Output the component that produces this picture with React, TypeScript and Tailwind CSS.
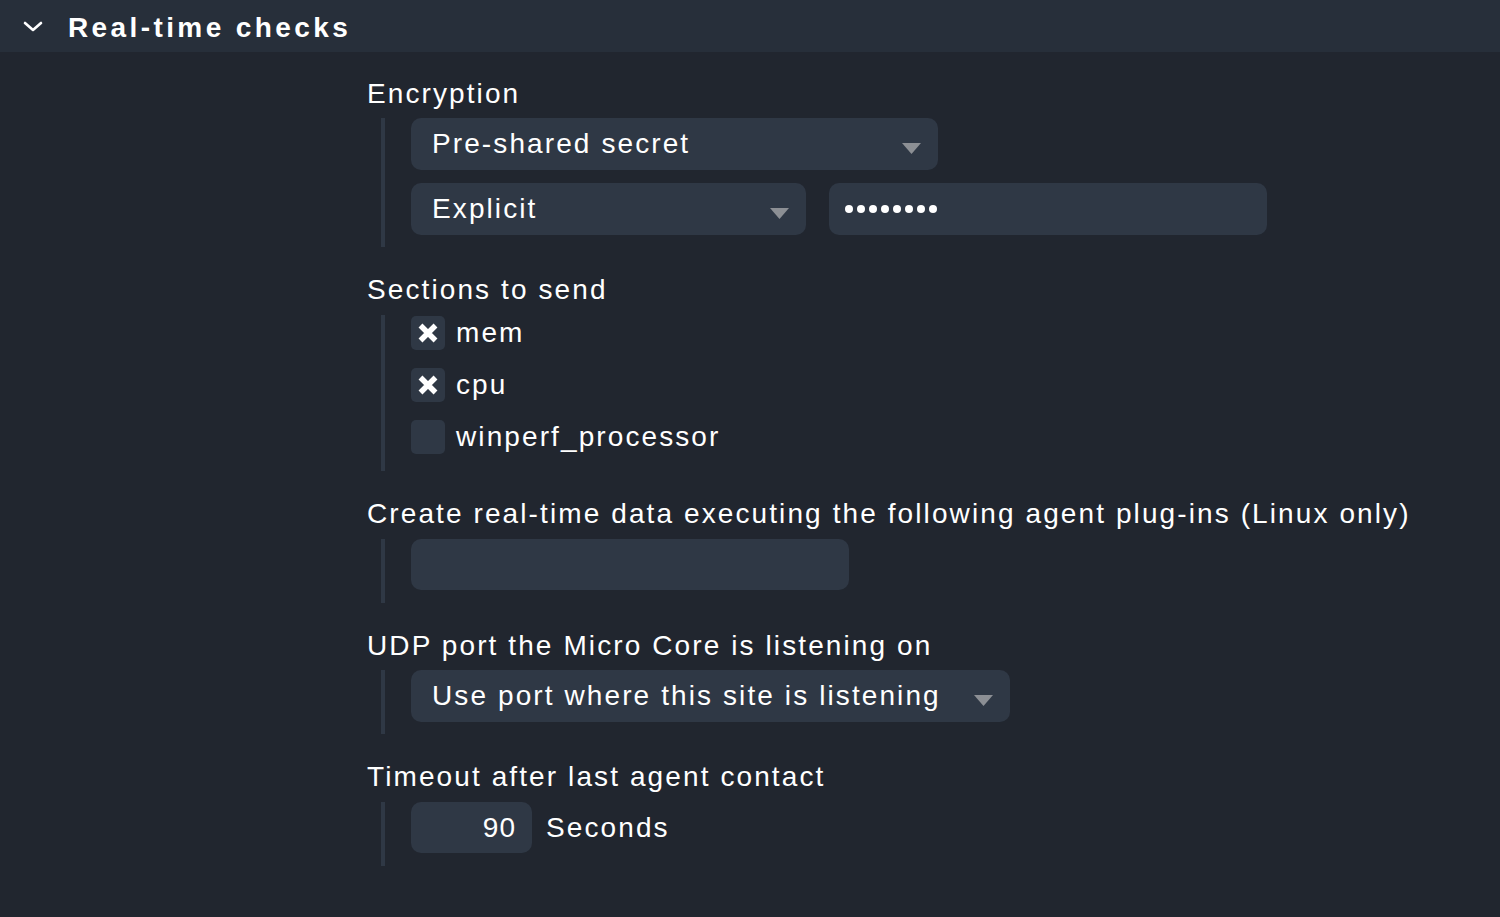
import React from "react";

const Arrow = () => (
  <svg width="19" height="11" viewBox="0 0 19 11" className="mt-[8px] shrink-0">
    <polygon points="0,0 19,0 9.5,11" fill="#8c8f94" />
  </svg>
);

const XMark = () => (
  <svg width="22" height="22" viewBox="0 0 22 22">
    <path d="M3.5 3.5 L18.5 18.5 M18.5 3.5 L3.5 18.5" stroke="#ffffff" strokeWidth="5.5" strokeLinecap="butt" />
  </svg>
);

const Label = ({ children, cls = "" }: { children: React.ReactNode; cls?: string }) => (
  <div className={`h-[32px] leading-[32px] text-[28px] tracking-[2.1px] text-white ${cls}`}>{children}</div>
);

const Block = ({ children, cls = "" }: { children: React.ReactNode; cls?: string }) => (
  <div className={`ml-[14px] border-l-4 border-[#2f3845] pl-[26px] ${cls}`}>{children}</div>
);

const Check = ({ checked, label }: { checked: boolean; label: string }) => (
  <div className="flex h-[52px] items-start pt-[1px]">
    <div className="flex h-[34px] w-[34px] items-center justify-center rounded-[5px] bg-[#2f3845]">
      {checked ? <XMark /> : null}
    </div>
    <span className="ml-[11px] h-[34px] leading-[34px] text-[28px] tracking-[2.1px] text-white">
      {label}
    </span>
  </div>
);

export default function App() {
  return (
    <div className="min-h-[917px] w-[1500px] bg-[#21262f] font-['Liberation_Sans',Arial,sans-serif]">
      <div className="flex h-[52px] items-center bg-[#272f3a] pl-[22px]">
        <svg width="22" height="14" viewBox="0 0 22 14">
          <path d="M3 4 L11 11 L19 4" stroke="#ffffff" strokeWidth="2.6" fill="none" strokeLinecap="round" strokeLinejoin="round" />
        </svg>
        <span className="ml-[24px] pt-[3px] text-[28px] font-bold tracking-[3.4px] text-white">
          Real-time checks
        </span>
      </div>

      <div className="pl-[367px] pt-[26px]">
        <Label>Encryption</Label>
        <Block cls="mt-[8px] pb-[12px]">
          <div className="flex h-[52px] w-[527px] items-center justify-between rounded-[10px] bg-[#2f3845] pl-[21px] pr-[17px]">
            <span className="text-[28px] tracking-[2.1px] text-white">Pre-shared secret</span>
            <Arrow />
          </div>
          <div className="mt-[13px] flex gap-[23px]">
            <div className="flex h-[52px] w-[395px] items-center justify-between rounded-[10px] bg-[#2f3845] pl-[21px] pr-[17px]">
              <span className="text-[28px] tracking-[2.1px] text-white">Explicit</span>
              <Arrow />
            </div>
            <div className="flex h-[52px] w-[438px] items-center gap-[4px] rounded-[10px] bg-[#2f3845] pl-[16px]">
              {Array.from({ length: 8 }).map((_, i) => (
                <span key={i} className="h-[8px] w-[8px] rounded-full bg-white" />
              ))}
            </div>
          </div>
        </Block>

        <Label cls="mt-[27px]">Sections to send</Label>
        <Block cls="mt-[9px]">
          <Check checked label="mem" />
          <Check checked label="cpu" />
          <Check checked={false} label="winperf_processor" />
        </Block>

        <Label cls="mt-[27px]">
          Create real-time data executing the following agent plug-ins (Linux only)
        </Label>
        <Block cls="mt-[9px] pb-[13px]">
          <div className="h-[51px] w-[438px] rounded-[10px] bg-[#2f3845]" />
        </Block>

        <Label cls="mt-[27px]">UDP port the Micro Core is listening on</Label>
        <Block cls="mt-[8px] pb-[12px]">
          <div className="flex h-[52px] w-[599px] items-center justify-between rounded-[10px] bg-[#2f3845] pl-[21px] pr-[17px]">
            <span className="text-[28px] tracking-[2.1px] text-white">Use port where this site is listening</span>
            <Arrow />
          </div>
        </Block>

        <Label cls="mt-[27px]">Timeout after last agent contact</Label>
        <Block cls="mt-[9px] pb-[13px]">
          <div className="flex items-center">
            <div className="flex h-[51px] w-[121px] items-center justify-end rounded-[10px] bg-[#2f3845] pr-[16px]">
              <span className="text-[28px] tracking-[1px] text-white">90</span>
            </div>
            <span className="ml-[14px] text-[28px] tracking-[2.1px] text-white">Seconds</span>
          </div>
        </Block>
      </div>
    </div>
  );
}
